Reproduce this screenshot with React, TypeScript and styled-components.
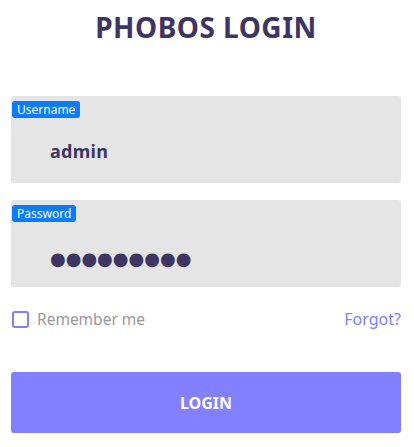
import React, { useState } from "react";
import styled, { createGlobalStyle } from "styled-components";

const GlobalStyle = createGlobalStyle`
  * { box-sizing: border-box; }
  body {
    margin: 0;
    background: #ffffff;
    font-family: "Noto Sans", "Open Sans", sans-serif;
  }
`;

const Page = styled.main`
  width: 390px;
  margin-left: 11px;
  display: flex;
  flex-direction: column;
`;

const Title = styled.h1`
  margin: 0;
  padding-top: 8px;
  height: 60px;
  text-align: center;
  font-size: 28px;
  font-weight: 700;
  letter-spacing: 0.5px;
  color: #3d3563;
`;

const Form = styled.form`
  display: flex;
  flex-direction: column;
  padding-top: 36px;
`;

const Field = styled.label`
  position: relative;
  display: block;
  height: 87px;
  background: #e5e5e5;
  border-radius: 3px;
  margin-bottom: 17px;
`;

const Badge = styled.span`
  position: absolute;
  top: 5px;
  left: 1px;
  height: 17px;
  padding: 0 5px;
  border-radius: 3px;
  background: #0a7cff;
  color: #ffffff;
  font-size: 12px;
  line-height: 17px;
`;

const Input = styled.input<{ $secret?: boolean }>`
  all: unset;
  box-sizing: border-box;
  display: block;
  width: 100%;
  height: 100%;
  padding: ${(p) => (p.$secret ? "29px 0 0 39px" : "22px 0 0 39px")};
  font-family: ${(p) => (p.$secret ? '"DejaVu Sans", sans-serif' : "inherit")};
  font-size: 18px;
  font-weight: 700;
  letter-spacing: ${(p) => (p.$secret ? "0px" : "0.3px")};
  color: #3d3563;
`;

const Options = styled.div`
  display: flex;
  align-items: center;
  justify-content: space-between;
  height: 30px;
`;

const Remember = styled.label`
  display: flex;
  align-items: center;
  gap: 8px;
  font-size: 15.5px;
  color: #9a9a9a;
  cursor: pointer;
`;

const Box = styled.span<{ $on: boolean }>`
  width: 17px;
  height: 17px;
  margin-left: 1px;
  border: 2px solid #8080ff;
  border-radius: 3px;
  background: ${(p) => (p.$on ? "#8080ff" : "transparent")};
`;

const Forgot = styled.a`
  font-size: 16px;
  color: #8080ff;
  text-decoration: none;
  cursor: pointer;
`;

const Submit = styled.button`
  all: unset;
  box-sizing: border-box;
  margin-top: 38px;
  height: 61px;
  border-radius: 3px;
  background: #8280ff;
  color: #ffffff;
  text-align: center;
  font-family: inherit;
  font-size: 16px;
  font-weight: 700;
  cursor: pointer;
`;

export default function App() {
  const [remember, setRemember] = useState(false);
  return (
    <>
      <GlobalStyle />
      <Page>
        <Title>PHOBOS LOGIN</Title>
        <Form onSubmit={(e) => e.preventDefault()}>
          <Field>
            <Badge>Username</Badge>
            <Input defaultValue="admin" />
          </Field>
          <Field>
            <Badge>Password</Badge>
            <Input $secret readOnly value={"\u25CF".repeat(9)} />
          </Field>
          <Options>
            <Remember onClick={() => setRemember(!remember)}>
              <Box $on={remember} />
              Remember me
            </Remember>
            <Forgot>Forgot?</Forgot>
          </Options>
          <Submit type="submit">LOGIN</Submit>
        </Form>
      </Page>
    </>
  );
}
